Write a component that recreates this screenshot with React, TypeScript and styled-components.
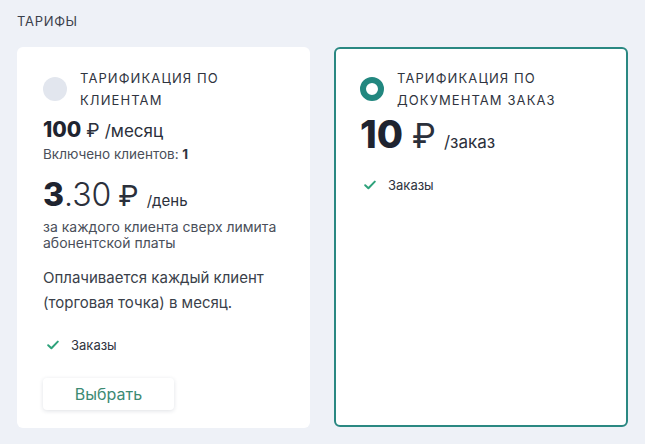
import React from 'react';
import styled, { createGlobalStyle } from 'styled-components';

const GlobalStyle = createGlobalStyle`
  html, body {
    margin: 0;
    padding: 0;
    background: #eef1f7;
    font-family: Inter, 'Noto Sans', sans-serif;
    color: #262b36;
  }
`;

const Page = styled.div`
  width: 645px;
  height: 444px;
  box-sizing: border-box;
  padding: 12px 17px 0 17px;
`;

const Title = styled.div`
  font-size: 13px;
  letter-spacing: 0.7px;
  color: #3b404b;
  line-height: 18px;
  margin-bottom: 17px;
`;

const Cards = styled.div`
  display: grid;
  grid-template-columns: 293px 294px;
  gap: 24px;
`;

const Card = styled.div<{ $active?: boolean }>`
  box-sizing: border-box;
  height: ${(p) => (p.$active ? '380px' : '381px')};
  background: #fff;
  border-radius: 6px;
  border: ${(p) => (p.$active ? '2px solid #2a8882' : '0')};
  padding: ${(p) => (p.$active ? '18px 24px' : '20px 26px')};
  display: flex;
  flex-direction: column;
  align-items: flex-start;
`;

const Head = styled.div`
  display: flex;
  align-items: center;
  gap: 13px;
`;

const Radio = styled.div<{ $checked?: boolean }>`
  flex: none;
  width: 24px;
  height: 24px;
  border-radius: 50%;
  box-sizing: border-box;
  background: ${(p) => (p.$checked ? '#fff' : '#e2e6ee')};
  border: ${(p) => (p.$checked ? '6px solid #22877f' : '0')};
`;

const PlanName = styled.div`
  font-size: 13px;
  letter-spacing: 1.1px;
  line-height: 22px;
  color: #2f3440;
`;

const Price = styled.div<{ $big?: boolean; $mt: number }>`
  display: flex;
  align-items: baseline;
  white-space: nowrap;
  margin-top: ${(p) => p.$mt}px;
  height: ${(p) => (p.$big ? '44px' : '26px')};
  line-height: ${(p) => (p.$big ? '44px' : '26px')};
`;

const Amount = styled.span<{ $size: number }>`
  font-size: ${(p) => p.$size}px;
  font-weight: 800;
  color: #1f2430;
`;

const Fraction = styled.span<{ $size: number }>`
  font-size: ${(p) => p.$size}px;
  font-weight: 300;
  color: #2b303b;
`;

const Currency = styled.span<{ $size: number }>`
  font-size: ${(p) => p.$size}px;
  font-weight: 400;
  color: #2b303b;
  line-height: 1;
  margin-left: ${(p) => Math.round(p.$size * 0.25)}px;
`;

const Unit = styled.span<{ $size: number; $gap: number }>`
  font-size: ${(p) => p.$size}px;
  line-height: 1;
  color: #2b303b;
  margin-left: ${(p) => p.$gap}px;
`;

const Included = styled.div`
  font-size: 13.5px;
  line-height: 18px;
  color: #4a4f5a;
  margin-top: 2px;

  b {
    font-weight: 700;
    color: #2f3440;
  }
`;

const Note = styled.div`
  font-size: 14px;
  line-height: 16px;
  color: #4a4f5a;
  margin-top: 2px;
`;

const Description = styled.div`
  font-size: 15px;
  line-height: 25px;
  color: #3a3f4a;
  margin-top: 14px;
`;

const Feature = styled.div<{ $mt: number }>`
  display: flex;
  align-items: center;
  gap: 12px;
  font-size: 13px;
  line-height: 16px;
  color: #2f3440;
  margin-top: ${(p) => p.$mt}px;
  padding-left: 4px;
`;

const Button = styled.button`
  margin-top: 25px;
  width: 131px;
  height: 32px;
  flex: none;
  border: 0;
  border-radius: 4px;
  background: #fff;
  box-shadow: 0 1px 4px rgba(30, 40, 70, 0.14);
  font-family: inherit;
  font-size: 16px;
  color: #3c8a73;
  cursor: pointer;
`;

const Check = () => (
  <svg width="12" height="10" viewBox="0 0 12 10">
    <path d="M1.2 5.2 L4.4 8.2 L10.8 1.6" fill="none" stroke="#2ea27b" strokeWidth="2" strokeLinecap="round" strokeLinejoin="round" />
  </svg>
);

const App = () => {
  return (
    <>
      <GlobalStyle />
      <Page>
        <Title>ТАРИФЫ</Title>
        <Cards>
          <Card>
            <Head>
              <Radio />
              <PlanName>
                ТАРИФИКАЦИЯ ПО
                <br />
                КЛИЕНТАМ
              </PlanName>
            </Head>
            <Price $mt={6}>
              <Amount $size={21}>100</Amount>
              <Currency $size={19}>₽</Currency>
              <Unit $size={17} $gap={5}>/месяц</Unit>
            </Price>
            <Included>
              Включено клиентов: <b>1</b>
            </Included>
            <Price $big $mt={10}>
              <Amount $size={32}>3</Amount>
              <Fraction $size={32}>.30</Fraction>
              <Currency $size={29}>₽</Currency>
              <Unit $size={15} $gap={8}>/день</Unit>
            </Price>
            <Note>
              за каждого клиента сверх лимита
              <br />
              абонентской платы
            </Note>
            <Description>
              Оплачивается каждый клиент
              <br />
              (торговая точка) в месяц.
            </Description>
            <Feature $mt={22}>
              <Check />
              Заказы
            </Feature>
            <Button>Выбрать</Button>
          </Card>
          <Card $active>
            <Head>
              <Radio $checked />
              <PlanName>
                ТАРИФИКАЦИЯ ПО
                <br />
                ДОКУМЕНТАМ ЗАКАЗ
              </PlanName>
            </Head>
            <Price $big $mt={1}>
              <Amount $size={38}>10</Amount>
              <Currency $size={34}>₽</Currency>
              <Unit $size={17} $gap={8}>/заказ</Unit>
            </Price>
            <Feature $mt={21}>
              <Check />
              Заказы
            </Feature>
          </Card>
        </Cards>
      </Page>
    </>
  );
};

export default React.memo(App);
